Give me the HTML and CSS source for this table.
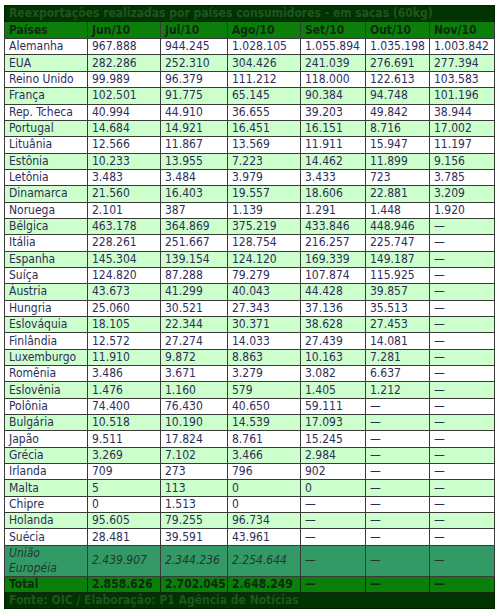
FILE: index.html
```html
<!DOCTYPE html>
<html lang="pt-BR">
<head>
    <meta charset="UTF-8">
    <meta name="viewport" content="width=device-width, initial-scale=1.0">
    <title>Reexportações por países consumidores</title>
    <link rel="stylesheet" href="styles.css">
</head>
<body>
    <table class="reexp">
        <colgroup>
            <col class="c-pais">
            <col class="c-jun">
            <col class="c-jul">
            <col class="c-ago">
            <col class="c-set">
            <col class="c-out">
            <col class="c-nov">
        </colgroup>
        <thead>
            <tr class="title"><th colspan="7">Reexportações realizadas por países consumidores - em sacas (60kg)</th></tr>
            <tr class="head">
                <th>Países</th><th>Jun/10</th><th>Jul/10</th><th>Ago/10</th><th>Set/10</th><th>Out/10</th><th>Nov/10</th>
            </tr>
        </thead>
        <tbody>
            <tr><td>Alemanha</td><td>967.888</td><td>944.245</td><td>1.028.105</td><td>1.055.894</td><td>1.035.198</td><td>1.003.842</td></tr>
            <tr><td>EUA</td><td>282.286</td><td>252.310</td><td>304.426</td><td>241.039</td><td>276.691</td><td>277.394</td></tr>
            <tr><td>Reino Unido</td><td>99.989</td><td>96.379</td><td>111.212</td><td>118.000</td><td>122.613</td><td>103.583</td></tr>
            <tr><td>França</td><td>102.501</td><td>91.775</td><td>65.145</td><td>90.384</td><td>94.748</td><td>101.196</td></tr>
            <tr><td>Rep. Tcheca</td><td>40.994</td><td>44.910</td><td>36.655</td><td>39.203</td><td>49.842</td><td>38.944</td></tr>
            <tr><td>Portugal</td><td>14.684</td><td>14.921</td><td>16.451</td><td>16.151</td><td>8.716</td><td>17.002</td></tr>
            <tr><td>Lituânia</td><td>12.566</td><td>11.867</td><td>13.569</td><td>11.911</td><td>15.947</td><td>11.197</td></tr>
            <tr><td>Estônia</td><td>10.233</td><td>13.955</td><td>7.223</td><td>14.462</td><td>11.899</td><td>9.156</td></tr>
            <tr><td>Letônia</td><td>3.483</td><td>3.484</td><td>3.979</td><td>3.433</td><td>723</td><td>3.785</td></tr>
            <tr><td>Dinamarca</td><td>21.560</td><td>16.403</td><td>19.557</td><td>18.606</td><td>22.881</td><td>3.209</td></tr>
            <tr><td>Noruega</td><td>2.101</td><td>387</td><td>1.139</td><td>1.291</td><td>1.448</td><td>1.920</td></tr>
            <tr><td>Bélgica</td><td>463.178</td><td>364.869</td><td>375.219</td><td>433.846</td><td>448.946</td><td>—</td></tr>
            <tr><td>Itália</td><td>228.261</td><td>251.667</td><td>128.754</td><td>216.257</td><td>225.747</td><td>—</td></tr>
            <tr><td>Espanha</td><td>145.304</td><td>139.154</td><td>124.120</td><td>169.339</td><td>149.187</td><td>—</td></tr>
            <tr><td>Suíça</td><td>124.820</td><td>87.288</td><td>79.279</td><td>107.874</td><td>115.925</td><td>—</td></tr>
            <tr><td>Áustria</td><td>43.673</td><td>41.299</td><td>40.043</td><td>44.428</td><td>39.857</td><td>—</td></tr>
            <tr><td>Hungria</td><td>25.060</td><td>30.521</td><td>27.343</td><td>37.136</td><td>35.513</td><td>—</td></tr>
            <tr><td>Eslováquia</td><td>18.105</td><td>22.344</td><td>30.371</td><td>38.628</td><td>27.453</td><td>—</td></tr>
            <tr><td>Finlândia</td><td>12.572</td><td>27.274</td><td>14.033</td><td>27.439</td><td>14.081</td><td>—</td></tr>
            <tr><td>Luxemburgo</td><td>11.910</td><td>9.872</td><td>8.863</td><td>10.163</td><td>7.281</td><td>—</td></tr>
            <tr><td>Romênia</td><td>3.486</td><td>3.671</td><td>3.279</td><td>3.082</td><td>6.637</td><td>—</td></tr>
            <tr><td>Eslovênia</td><td>1.476</td><td>1.160</td><td>579</td><td>1.405</td><td>1.212</td><td>—</td></tr>
            <tr><td>Polônia</td><td>74.400</td><td>76.430</td><td>40.650</td><td>59.111</td><td>—</td><td>—</td></tr>
            <tr><td>Bulgária</td><td>10.518</td><td>10.190</td><td>14.539</td><td>17.093</td><td>—</td><td>—</td></tr>
            <tr><td>Japão</td><td>9.511</td><td>17.824</td><td>8.761</td><td>15.245</td><td>—</td><td>—</td></tr>
            <tr><td>Grécia</td><td>3.269</td><td>7.102</td><td>3.466</td><td>2.984</td><td>—</td><td>—</td></tr>
            <tr><td>Irlanda</td><td>709</td><td>273</td><td>796</td><td>902</td><td>—</td><td>—</td></tr>
            <tr><td>Malta</td><td>5</td><td>113</td><td>0</td><td>0</td><td>—</td><td>—</td></tr>
            <tr><td>Chipre</td><td>0</td><td>1.513</td><td>0</td><td>—</td><td>—</td><td>—</td></tr>
            <tr><td>Holanda</td><td>95.605</td><td>79.255</td><td>96.734</td><td>—</td><td>—</td><td>—</td></tr>
            <tr><td>Suécia</td><td>28.481</td><td>39.591</td><td>43.961</td><td>—</td><td>—</td><td>—</td></tr>
        </tbody>
        <tfoot>
            <tr class="ue"><td>União<br>Européia</td><td>2.439.907</td><td>2.344.236</td><td>2.254.644</td><td>—</td><td>—</td><td>—</td></tr>
            <tr class="total"><td>Total</td><td>2.858.626</td><td>2.702.045</td><td>2.648.249</td><td>—</td><td>—</td><td>—</td></tr>
            <tr class="fonte"><td colspan="7">Fonte: OIC / Elaboração: P1 Agência de Notícias</td></tr>
        </tfoot>
    </table>
</body>
</html>
```

FILE: styles.css
```css
body {
    margin: 0;
    padding: 5px 0 0 4px;
    background-color: #ffffff;
    font-family: "DejaVu Sans Condensed", "DejaVu Sans", sans-serif;
    font-stretch: condensed;
    font-size: 12px;
}
.reexp {
    border-collapse: collapse;
    table-layout: fixed;
    width: 490px;
    color: #2e2e58;
}
.c-pais { width: 83px; }
.c-jun { width: 73px; }
.c-jul { width: 67px; }
.c-ago { width: 73px; }
.c-set { width: 65px; }
.c-out { width: 64px; }
.c-nov { width: 65px; }
.reexp th,
.reexp td {
    border: 1px solid #3a3a3a;
    padding: 0 3px 0 4px;
    height: 15.35px;
    line-height: 15px;
    text-align: left;
    white-space: nowrap;
    overflow: hidden;
    vertical-align: middle;
}
.reexp tbody tr:nth-child(odd) {
    background-color: #ffffff;
}
.reexp tbody tr:nth-child(even) {
    background-color: #ccffcc;
}
.title th {
    background-color: #003300;
    color: #1f561f;
    font-weight: bold;
    border-color: #002200;
}
.head th {
    background-color: #0a7f0a;
    color: #0f2a0f;
    font-weight: bold;
    height: 15.8px;
}
.ue td {
    background-color: #339966;
    color: #1f3a2a;
    font-style: italic;
    height: 30px;
}
.total td {
    background-color: #0a7f0a;
    color: #0f2a0f;
    font-weight: bold;
    border-color: #0f2a0f;
}
.fonte td {
    background-color: #003300;
    color: #1f561f;
    font-weight: bold;
    border-color: #002200;
}
```
